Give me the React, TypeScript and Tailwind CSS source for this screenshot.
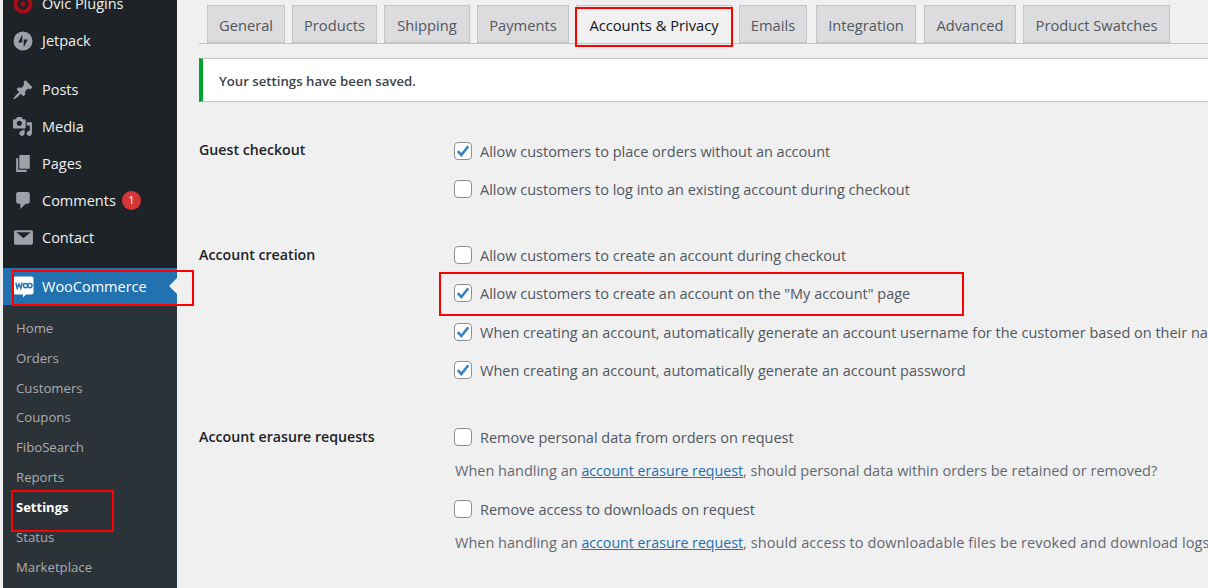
import React from "react";

const font = { fontFamily: '"Open Sans", "Noto Sans", sans-serif' };

const Pin = () => (
  <svg viewBox="0 0 20 20" className="w-[22px] h-[22px] -ml-[1px]" fill="#9ca2a7"><path d="M10.44 3.02l1.82-1.82 6.36 6.35-1.83 1.82c-1.05-.68-2.48-.57-3.41.36l-.75.75c-.92.93-1.04 2.35-.35 3.41l-1.83 1.82-2.41-2.41-2.8 2.79c-.42.42-3.38 2.71-3.8 2.29s1.86-3.39 2.28-3.81l2.79-2.79L4.1 9.36l1.83-1.82c1.05.69 2.48.57 3.4-.36l.75-.75c.93-.92 1.05-2.35.36-3.41z" /></svg>
);
const Media = () => (
  <svg viewBox="0 0 20 20" className="w-[21px] h-[21px] -ml-[1px]" fill="#9ca2a7"><path d="M13 11V4c0-.55-.45-1-1-1h-1.67L9 1H5L3.67 3H2c-.55 0-1 .45-1 1v7c0 .55.45 1 1 1h10c.55 0 1-.45 1-1zM7 4.5c1.38 0 2.5 1.12 2.5 2.5S8.38 9.5 7 9.5 4.5 8.38 4.5 7 5.62 4.5 7 4.5zM14 6h5v10.5c0 1.38-1.12 2.5-2.5 2.5S14 17.88 14 16.5s1.12-2.5 2.5-2.5c.17 0 .34.02.5.05V9h-3V6zm-4 8.05V13h2v3.5c0 1.38-1.12 2.5-2.5 2.5S7 17.88 7 16.5 8.12 14 9.5 14c.17 0 .34.02.5.05z" /></svg>
);
const Pages = () => (
  <svg viewBox="0 0 20 20" className="w-[21px] h-[21px]" fill="#9ca2a7"><path d="M6 15V2h10v13H6zm-1 1h8v2H3V5h2v11z" /></svg>
);
const Comment = () => (
  <svg viewBox="0 0 20 20" className="w-[21px] h-[21px]" fill="#9ca2a7"><path d="M5 2h9c1.1 0 2 .9 2 2v7c0 1.1-.9 2-2 2h-2l-5 5v-5H5c-1.1 0-2-.9-2-2V4c0-1.1.9-2 2-2z" /></svg>
);
const Mail = () => (
  <svg viewBox="0 0 20 20" className="w-[21px] h-[21px]" fill="#9ca2a7"><path d="M1 4.5C1 3.7 1.7 3 2.5 3h15c.8 0 1.5.7 1.5 1.5v11c0 .8-.7 1.5-1.5 1.5h-15C1.7 17 1 16.3 1 15.5v-11zM3.2 5 10 10.6 16.8 5H3.2z" /></svg>
);
const Jetpack = () => (
  <svg viewBox="0 0 20 20" className="w-[20px] h-[20px]"><circle cx="10" cy="10" r="9.5" fill="#9ca2a7" /><path d="M9.3 3.5v8H5.2z M10.7 16.5v-8h4.1z" fill="#1d2327" /></svg>
);
const Ovic = () => (
  <svg viewBox="0 0 20 20" className="w-[20px] h-[20px]"><circle cx="10" cy="10" r="7.5" fill="none" stroke="#a90d15" strokeWidth="4" /><circle cx="10" cy="10" r="2.5" fill="#a90d15" /></svg>
);
const Woo = () => (
  <svg viewBox="0 0 21 22" className="w-[21px] h-[22px]">
    <path d="M2.5 0.5h16c1.1 0 2 .9 2 2v14c0 1.1-.9 2-2 2h-5.5l-3 3v-3h-7.500c-1.100 0-2-.9-2-2v-14c0-1.100.9-2 2-2z" fill="#fff" />
    <path d="M2.800 6.500l1.400 6 1.800-4.500 1.800 4.500 1.400-6" fill="none" stroke="#2271b1" strokeWidth="1.400" />
    <circle cx="12.500" cy="9.600" r="2.100" fill="none" stroke="#2271b1" strokeWidth="1.400" />
    <circle cx="17" cy="9.600" r="2.100" fill="none" stroke="#2271b1" strokeWidth="1.400" />
  </svg>
);

const topItems: [string, React.ReactNode][] = [
  ["Ovic Plugins", <Ovic />],
  ["Jetpack", <Jetpack />],
];
const midItems: [string, React.ReactNode, boolean?][] = [
  ["Posts", <Pin />],
  ["Media", <Media />],
  ["Pages", <Pages />],
  ["Comments", <Comment />, true],
  ["Contact", <Mail />],
];
const subItems = ["Home", "Orders", "Customers", "Coupons", "FiboSearch", "Reports", "Settings", "Status", "Marketplace"];
const tabs: [string, string][] = [
  ["General", "w-[78px] mr-[7px]"],
  ["Products", "w-[85px] mr-[7px]"],
  ["Shipping", "w-[86px] mr-[7px]"],
  ["Payments", "w-[92px] mr-[7px]"],
  ["Accounts & Privacy", "w-[156px] mr-[7px]"],
  ["Emails", "w-[68px] mr-[9px]"],
  ["Integration", "w-[100px] mr-[8px]"],
  ["Advanced", "w-[92px] mr-[7px]"],
  ["Product Swatches", "w-[147px]"],
];

function MenuRow({ label, icon, badge }: { label: string; icon: React.ReactNode; badge?: boolean }) {
  return (
    <div className="h-[37px] flex items-center pl-[10px] text-[#f0f0f1] text-[14.5px]">
      <span className="w-[29px] flex items-center justify-start">{icon}</span>
      <span>{label}</span>
      {badge && (
        <span className="ml-[6px] w-[19px] h-[19px] rounded-full bg-[#d63638] text-white text-[11px] flex items-center justify-center">1</span>
      )}
    </div>
  );
}

function Check({ checked }: { checked?: boolean }) {
  return (
    <span className="w-[18px] h-[18px] shrink-0 -mt-[2px] rounded-[4px] border border-[#8c8f94] bg-white flex items-center justify-center">
      {checked && (
        <svg viewBox="0 0 16 16" className="w-[16px] h-[16px]">
          <path d="M2.800 8.200 6.300 12 13.300 3.200" fill="none" stroke="#3582c4" strokeWidth="2.600" />
        </svg>
      )}
    </span>
  );
}

function Option({ label, checked, className = "" }: { label: string; checked?: boolean; className?: string }) {
  return (
    <div className={"h-[20px] flex items-center gap-[8px] whitespace-nowrap text-[#50575e] text-[14.5px] " + className}>
      <Check checked={checked} />
      <span>{label}</span>
    </div>
  );
}

function Help({ before, link, after, className = "", afterClass = "" }: { before: string; link: string; after: string; className?: string; afterClass?: string }) {
  return (
    <div className={"h-[20px] ml-[1px] flex items-center whitespace-pre text-[#646970] text-[14.5px] " + className}>
      <span>{before}</span>
      <span className="underline text-[#2271b1] text-[14.2px]">{link}</span>
      <span className={afterClass}>{after}</span>
    </div>
  );
}

function Section({ title, children, className = "", titleClass = "-mt-[1px]" }: { title: string; children: React.ReactNode; className?: string; titleClass?: string }) {
  return (
    <div className={"flex " + className}>
      <div className={"w-[255px] shrink-0 font-semibold text-[#1d2327] text-[14.2px] leading-[20px] " + titleClass}>{title}</div>
      <div className="flex flex-col">{children}</div>
    </div>
  );
}

export default function App() {
  return (
    <div className="relative w-[1208px] h-[588px] overflow-hidden bg-[#f0f0f1] flex" style={font}>
      <div className="w-[3px] bg-[#f0f0f1] shrink-0" />
      <aside className="w-[174px] shrink-0 bg-[#1d2327] flex flex-col h-[640px] -mt-[15px]">
        {topItems.map(([l, i]) => <MenuRow key={l} label={l} icon={i} />)}
        <div className="h-[12px]" />
        {midItems.map(([l, i, b]) => <MenuRow key={l} label={l} icon={i} badge={b} />)}
        <div className="h-[12px]" />
        <div className="relative h-[37px] bg-[#2271b1] flex items-center pl-[10px] text-white text-[14.5px]">
          <span className="w-[29px] flex"><Woo /></span>
          <span>WooCommerce</span>
          <span className="absolute right-0 top-[10px] border-y-[8px] border-r-[8px] border-y-transparent border-r-[#f0f0f1]" />
        </div>
        <div className="bg-[#2c3338] flex-1 pt-[8.700px]">
          {subItems.map((s) => (
            <div key={s} className={"h-[29.9px] flex items-center pl-[13px] text-[13.2px] " + (s === "Settings" ? "text-white font-bold text-[13px]" : "text-[#c3c4c7]/85")}>{s}</div>
          ))}
        </div>
      </aside>
      <main className="flex-1 min-w-0 pl-[22px] pt-[5px]">
        <div className="flex border-b border-[#c3c4c7] h-[39px] pl-[8px] w-[1100px]">
          {tabs.map(([t, w]) => {
            const active = t === "Accounts & Privacy";
            return (
              <div key={t} className={"h-[38px] border border-[#c3c4c7] pt-[3px] flex items-center justify-center font-medium text-[14.7px] whitespace-nowrap " + w + " " + (active ? "bg-[#f0f0f1] border-b-[#f0f0f1] text-[#101517]" : "bg-[#dcdcde] text-[#50575e]")}>
                {t}
              </div>
            );
          })}
        </div>
        <div className="mt-[14px] h-[44px] w-[1100px] bg-white border border-[#c3c4c7] border-l-[4px] border-l-[#00a32a] flex items-center pl-[16px] pt-[3px] font-semibold text-[#3c434a] text-[13.2px]">
          Your settings have been saved.
        </div>
        <div className="mt-[40px] flex flex-col">
          <Section title="Guest checkout" titleClass="-mt-[2px]">
            <Option label="Allow customers to place orders without an account" checked />
            <Option label="Allow customers to log into an existing account during checkout" className="mt-[18px]" />
          </Section>
          <Section title="Account creation" className="mt-[46px]">
            <Option label="Allow customers to create an account during checkout" />
            <Option label='Allow customers to create an account on the "My account" page' checked className="mt-[18px]" />
            <Option label="When creating an account, automatically generate an account username for the customer based on their name, surname or email" checked className="mt-[19px]" />
            <Option label="When creating an account, automatically generate an account password" checked className="mt-[18px]" />
          </Section>
          <Section title="Account erasure requests" className="mt-[47px]">
            <Option label="Remove personal data from orders on request" />
            <Help before="When handling an " link="account erasure request" after=", should personal data within orders be retained or removed?" className="mt-[13px]" />
            <Option label="Remove access to downloads on request" className="mt-[19px]" />
            <Help before="When handling an " link="account erasure request" after=", should access to downloadable files be revoked and download logs cleared?" afterClass="tracking-[0.1px]" className="mt-[13px]" />
          </Section>
        </div>
      </main>
      <div className="absolute left-[575px] top-[7px] w-[158px] h-[40px] border-2 border-[#f00]" />
      <div className="absolute left-[439px] top-[272px] w-[525px] h-[44px] border-2 border-[#f00]" />
      <div className="absolute left-[12px] top-[270px] w-[182px] h-[36px] border-2 border-[#f00]" />
      <div className="absolute left-[11px] top-[490px] w-[103px] h-[42px] border-2 border-[#f00]" />
    </div>
  );
}
